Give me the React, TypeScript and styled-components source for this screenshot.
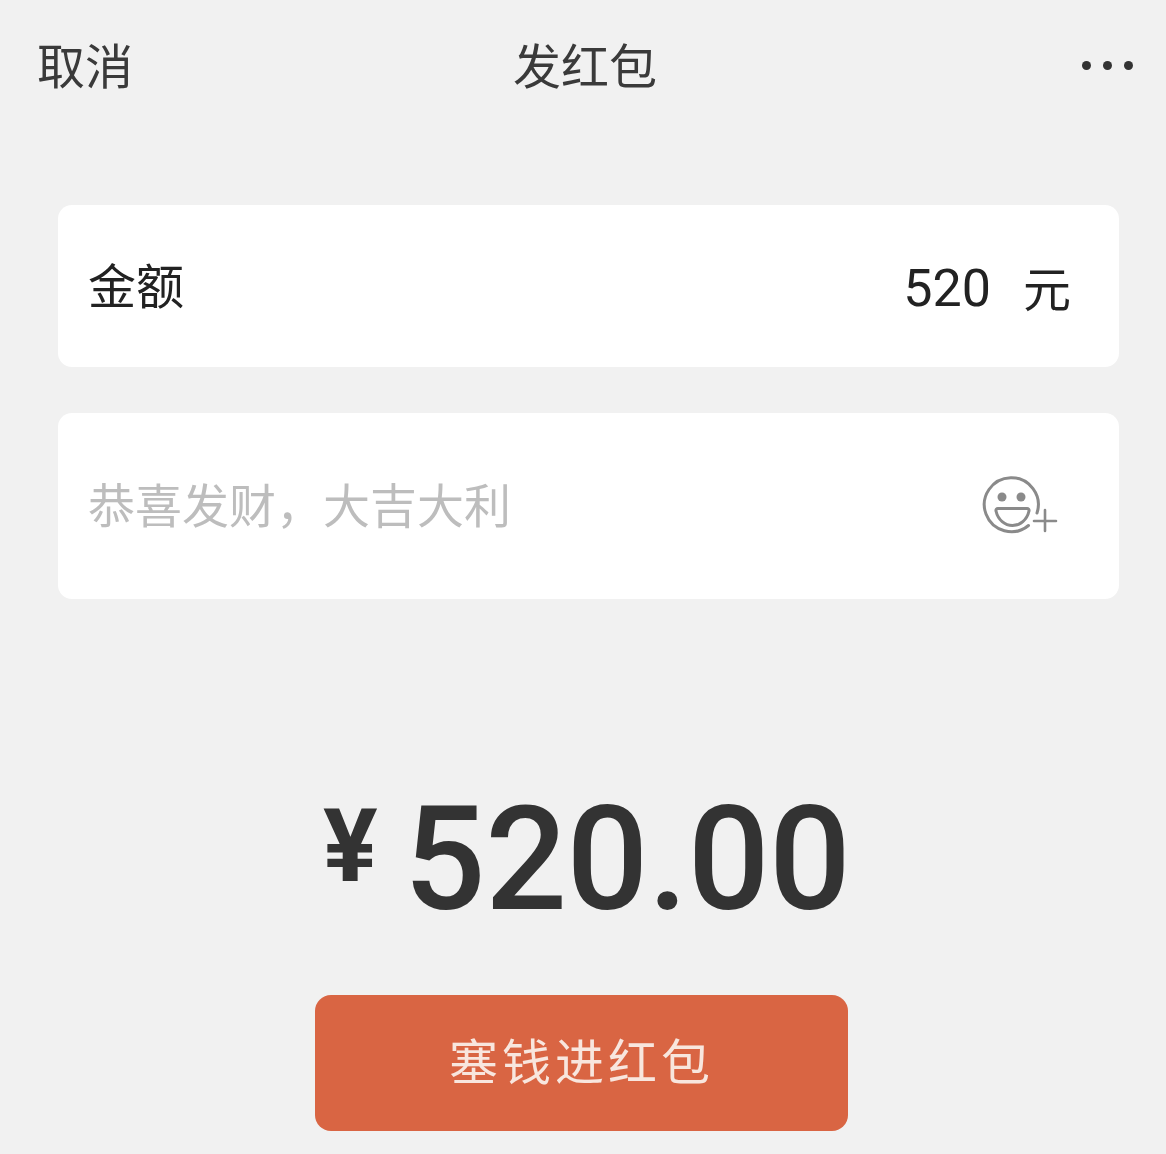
import React from "react";
import styled, { createGlobalStyle } from "styled-components";

const Global = createGlobalStyle`
  html, body { margin: 0; padding: 0; background: #f1f1f1; }
  * { box-sizing: border-box; }
`;
const cjk = `"Noto Sans CJK SC", "Noto Sans", sans-serif`;
const Page = styled.div`
  width: 1166px; height: 1154px; overflow: hidden; background: #f1f1f1;
  display: flex; flex-direction: column; align-items: flex-start;
  font-family: ${cjk}; color: #333; filter: blur(0.6px);
`;
const TopBar = styled.header`
  width: 100%; height: 134px; padding: 0 33px 8px 37px;
  display: grid; grid-template-columns: 1fr auto 1fr; align-items: center;
`;
const BarText = styled.span`font-size: 48px; line-height: 1; color: #3a3a3a;`;
const Dots = styled.div`display: flex; gap: 12px; justify-self: end; margin-top: 4px;`;
const Dot = styled.i`width: 9px; height: 9px; border-radius: 50%; background: #333; display: block;`;
const Card = styled.section<{ $h: number; $mt: number; $pr: number }>`
  width: 1061px; height: ${p => p.$h}px; margin: ${p => p.$mt}px 0 0 58px;
  background: #fff; border-radius: 14px; padding: 0 ${p => p.$pr}px 0 30px;
  display: flex; align-items: center; justify-content: space-between;
`;
const Label = styled.span`font-size: 48px; line-height: 1; color: #222;`;
const TitleLabel = styled(Label)`margin-bottom: 7px;`;
const Amount = styled.span`display: flex; align-items: center; gap: 32px; color: #222;`;
const AmountNum = styled.span`font: 52px/1 "Roboto", sans-serif; margin-top: 5px;`;
const Hint = styled.span`font-size: 47px; line-height: 1; color: #bdbdbd; margin-bottom: 8px;`;
const Total = styled.div`
  margin: 197px 0 0 323px; display: flex; align-items: flex-start; color: #333; height: 134px;
  font-family: "Roboto", sans-serif;
`;
const Yen = styled.span`font-size: 102px; line-height: 100px; font-weight: 700; margin-right: 26px;`;
const Sum = styled.span`font-size: 144px; line-height: 128px; font-weight: 500; letter-spacing: -0.4px;`;
const Pay = styled.button`
  margin: 65px 0 0 315px; width: 533px; height: 136px; border: 0; border-radius: 16px;
  background: #d96543; color: #f8e6de; font: 49px/1 ${cjk}; letter-spacing: 4px; padding: 0 0 10px;
`;

export default function App() {
  return (
    <Page>
      <Global />
      <TopBar>
        <BarText>取消</BarText>
        <BarText>发红包</BarText>
        <Dots><Dot /><Dot /><Dot /></Dots>
      </TopBar>
      <Card $h={162} $mt={71} $pr={48}>
        <TitleLabel>金额</TitleLabel>
        <Amount><AmountNum>520</AmountNum><Label>元</Label></Amount>
      </Card>
      <Card $h={186} $mt={46} $pr={61}>
        <Hint>恭喜发财，大吉大利</Hint>
        <svg width="76" height="60" viewBox="0 0 76 60" fill="none" stroke="#8a8a8a" strokeWidth="3" strokeLinecap="round" strokeLinejoin="round">
          <path d="M55 37A27 27 0 1 0 46.5 49.5" />
          <circle cx="20" cy="21" r="4.5" fill="#8a8a8a" stroke="none" />
          <circle cx="39" cy="21" r="4.5" fill="#8a8a8a" stroke="none" />
          <path d="M16 32.5h29a2 2 0 0 1 2 2.5c-2 9-9 14.5-16.5 14.5S16 44 14 35a2 2 0 0 1 2-2.5z" />
          <path d="M52 45h22M63 34v21" strokeWidth="2.6" />
        </svg>
      </Card>
      <Total><Yen>¥</Yen><Sum>520.00</Sum></Total>
      <Pay>塞钱进红包</Pay>
    </Page>
  );
}
